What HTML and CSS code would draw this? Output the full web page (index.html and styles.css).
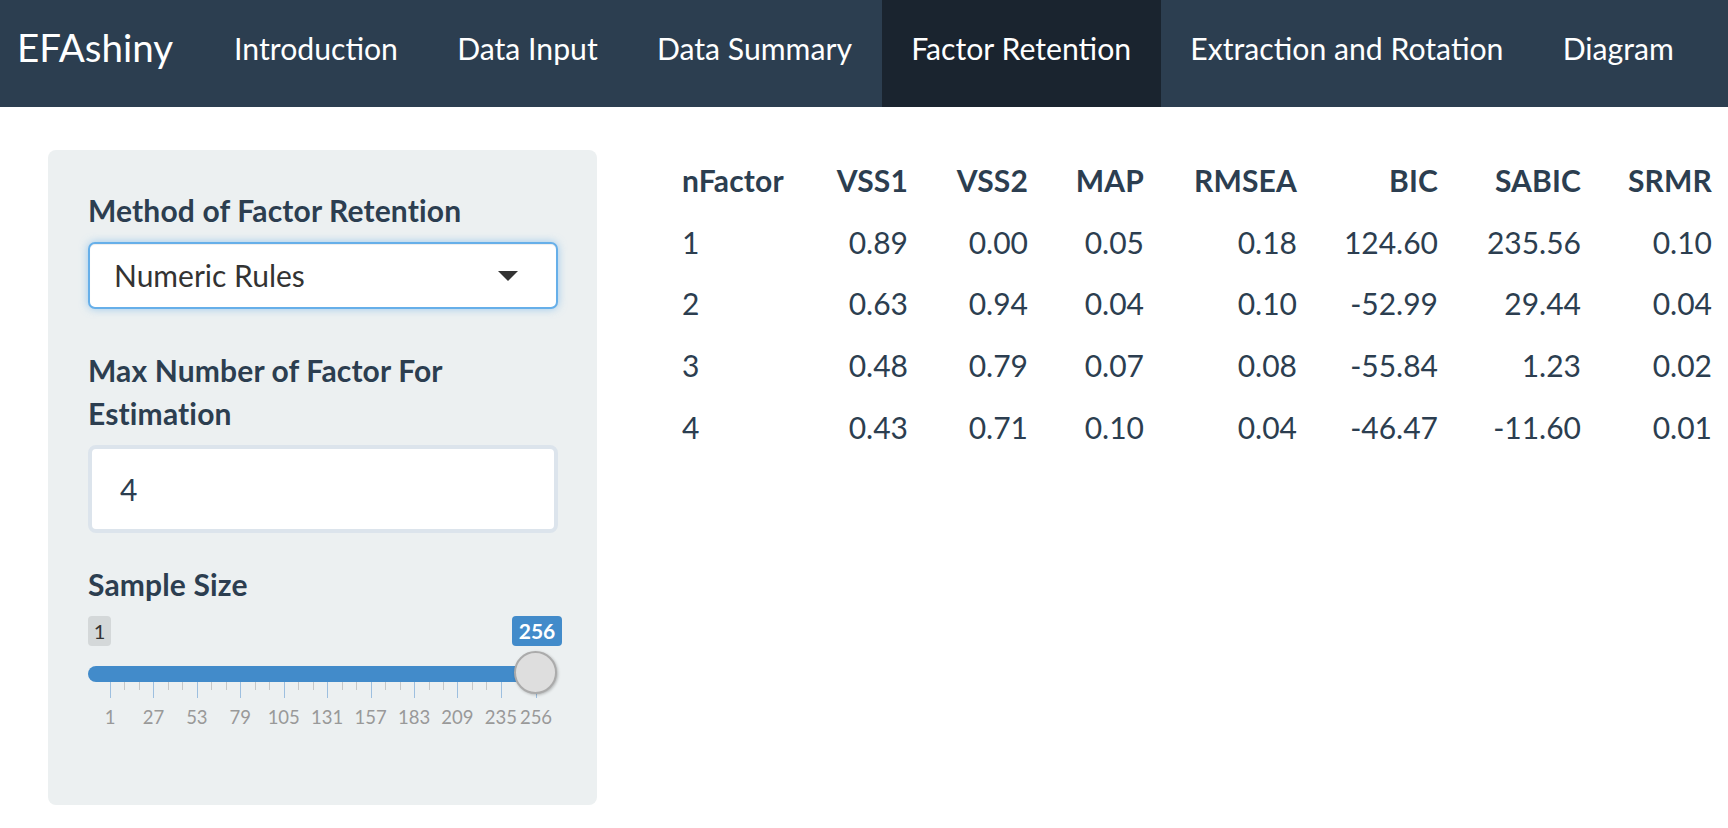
FILE: index.html
```html
<!DOCTYPE html>
<html>
<head>
<meta charset="utf-8">
<link rel="stylesheet" href="styles.css">
</head>
<body>
<nav class="navbar">
  <span class="brand">EFAshiny</span>
  <ul class="nav">
    <li class="nav-item">Introduction</li>
    <li class="nav-item">Data Input</li>
    <li class="nav-item">Data Summary</li>
    <li class="nav-item active">Factor Retention</li>
    <li class="nav-item">Extraction and Rotation</li>
    <li class="nav-item">Diagram</li>
  </ul>
</nav>
<div class="content">
  <aside class="well">
    <div class="form-group sel-group">
      <label class="label">Method of Factor Retention</label>
      <div class="select">
        <span class="select-text">Numeric Rules</span>
        <span class="caret"></span>
      </div>
    </div>
    <div class="form-group">
      <label class="label">Max Number of Factor For Estimation</label>
      <div class="num-input">4</div>
    </div>
    <div class="form-group">
      <label class="label">Sample Size</label>
      <div class="slider">
        <span class="badge-min">1</span>
        <span class="badge-val">256</span>
        <div class="bar"></div>
        <div class="grid">
          <span class="tick major" style="left:0%"></span>
          <span class="tick" style="left:3.399%"></span>
          <span class="tick" style="left:6.797%"></span>
          <span class="tick major" style="left:10.196%"></span>
          <span class="tick" style="left:13.595%"></span>
          <span class="tick" style="left:16.993%"></span>
          <span class="tick major" style="left:20.392%"></span>
          <span class="tick" style="left:23.791%"></span>
          <span class="tick" style="left:27.190%"></span>
          <span class="tick major" style="left:30.588%"></span>
          <span class="tick" style="left:33.987%"></span>
          <span class="tick" style="left:37.386%"></span>
          <span class="tick major" style="left:40.784%"></span>
          <span class="tick" style="left:44.183%"></span>
          <span class="tick" style="left:47.582%"></span>
          <span class="tick major" style="left:50.980%"></span>
          <span class="tick" style="left:54.379%"></span>
          <span class="tick" style="left:57.778%"></span>
          <span class="tick major" style="left:61.176%"></span>
          <span class="tick" style="left:64.575%"></span>
          <span class="tick" style="left:67.974%"></span>
          <span class="tick major" style="left:71.373%"></span>
          <span class="tick" style="left:74.771%"></span>
          <span class="tick" style="left:78.170%"></span>
          <span class="tick major" style="left:81.569%"></span>
          <span class="tick" style="left:84.967%"></span>
          <span class="tick" style="left:88.366%"></span>
          <span class="tick major" style="left:91.765%"></span>
          <span class="tick major" style="left:100%"></span>
          <span class="grid-label" style="left:0%">1</span>
          <span class="grid-label" style="left:10.196%">27</span>
          <span class="grid-label" style="left:20.392%">53</span>
          <span class="grid-label" style="left:30.588%">79</span>
          <span class="grid-label" style="left:40.784%">105</span>
          <span class="grid-label" style="left:50.980%">131</span>
          <span class="grid-label" style="left:61.176%">157</span>
          <span class="grid-label" style="left:71.373%">183</span>
          <span class="grid-label" style="left:81.569%">209</span>
          <span class="grid-label" style="left:91.765%">235</span>
          <span class="grid-label" style="left:100%">256</span>
        </div>
        <span class="handle"></span>
      </div>
    </div>
  </aside>
  <main class="main">
    <table class="table">
      <thead>
        <tr><th>nFactor</th><th>VSS1</th><th>VSS2</th><th>MAP</th><th>RMSEA</th><th>BIC</th><th>SABIC</th><th>SRMR</th></tr>
      </thead>
      <tbody>
        <tr><td>1</td><td>0.89</td><td>0.00</td><td>0.05</td><td>0.18</td><td>124.60</td><td>235.56</td><td>0.10</td></tr>
        <tr><td>2</td><td>0.63</td><td>0.94</td><td>0.04</td><td>0.10</td><td>-52.99</td><td>29.44</td><td>0.04</td></tr>
        <tr><td>3</td><td>0.48</td><td>0.79</td><td>0.07</td><td>0.08</td><td>-55.84</td><td>1.23</td><td>0.02</td></tr>
        <tr><td>4</td><td>0.43</td><td>0.71</td><td>0.10</td><td>0.04</td><td>-46.47</td><td>-11.60</td><td>0.01</td></tr>
      </tbody>
    </table>
  </main>
</div>
</body>
</html>
```
FILE: styles.css
```css
html, body {
  margin: 0;
  padding: 0;
  background: #ffffff;
  overflow: hidden;
}
body {
  font-family: Lato, "Open Sans", "Liberation Sans", sans-serif;
  font-size: 30px;
  line-height: 43px;
  color: #2c3e50;
}
.navbar {
  display: flex;
  align-items: stretch;
  height: 107px;
  background: #2c3e50;
  padding-left: 17px;
  box-sizing: border-box;
}
.brand {
  font-size: 38.5px;
  line-height: 43px;
  color: #ffffff;
  padding: 26px 30px 38px 0;
}
.nav {
  display: flex;
  list-style: none;
  margin: 0;
  padding: 0;
}
.nav-item {
  color: #ffffff;
  font-size: 30.2px;
  padding: 27px 29.6px 37px 29.6px;
  line-height: 43px;
}
.nav-item:first-child {
  padding-left: 31px;
}
.nav-item.active {
  background: #1a242f;
}
.content {
  display: flex;
  align-items: flex-start;
  padding: 43px 0 0 48px;
  column-gap: 85px;
}
.well {
  width: 549px;
  height: 655px;
  box-sizing: border-box;
  background: #ecf0f1;
  border-radius: 8px;
  padding: 39px 39px 38px 40px;
  flex-shrink: 0;
}
.form-group {
  margin-bottom: 30px;
}
.sel-group {
  margin-bottom: 40px;
}
.label {
  display: block;
  font-weight: 700;
  letter-spacing: 0.15px;
  margin-bottom: 10px;
}
.select {
  position: relative;
  height: 67px;
  box-sizing: border-box;
  border: 2px solid #66afe9;
  border-radius: 7px;
  background: #ffffff;
  box-shadow: inset 0 1px 1px rgba(0,0,0,0.075), 0 0 9px rgba(102,175,233,0.6);
  display: flex;
  align-items: center;
  padding-left: 24px;
  color: #333333;
}
.select-text {
  line-height: 43px;
}
.caret {
  position: absolute;
  right: 38px;
  top: 27px;
  width: 0;
  height: 0;
  border-style: solid;
  border-width: 10px 10px 0 10px;
  border-color: #333333 transparent transparent transparent;
}
.num-input {
  height: 88px;
  box-sizing: border-box;
  border: 4px solid #dce4ec;
  border-radius: 8px;
  background: #ffffff;
  padding-left: 28px;
  display: flex;
  align-items: center;
  color: #2c3e50;
}
.slider {
  position: relative;
  height: 124px;
  margin-top: 10px;
}
.badge-min {
  position: absolute;
  left: 0;
  top: 0;
  width: 23px;
  height: 30px;
  border-radius: 4px;
  background: #d4d8d9;
  color: #333333;
  font-size: 20px;
  line-height: 30px;
  text-align: center;
}
.badge-val {
  position: absolute;
  left: 424px;
  top: 0;
  width: 50px;
  height: 30px;
  border-radius: 4px;
  background: #428bca;
  color: #ffffff;
  font-size: 21px;
  font-weight: 700;
  line-height: 30px;
  text-align: center;
}
.bar {
  position: absolute;
  left: 0;
  top: 50px;
  width: 455px;
  height: 16px;
  border-radius: 8px 0 0 8px;
  background: #428bca;
}
.grid {
  position: absolute;
  left: 22px;
  top: 66px;
  width: 426px;
  height: 58px;
}
.tick {
  position: absolute;
  top: 0;
  width: 1px;
  height: 8px;
  background: #c4c7c9;
}
.tick.major {
  height: 16px;
  background: #9dbfdf;
}
.grid-label {
  position: absolute;
  top: 25px;
  transform: translateX(-50%);
  font-size: 18.5px;
  line-height: 20px;
  color: #999999;
}
.handle {
  position: absolute;
  left: 426px;
  top: 35px;
  width: 43px;
  height: 43px;
  box-sizing: border-box;
  border-radius: 50%;
  background: #dedede;
  border: 2px solid #ababab;
  box-shadow: 1px 1px 3px rgba(0,0,0,0.25);
}
.main {
  padding-top: 0;
}
.table {
  border-collapse: collapse;
  table-layout: fixed;
  width: 1030px;
}
.table th, .table td {
  padding: 9.3px 0;
  line-height: 43px;
  text-align: right;
  white-space: nowrap;
}
.table th {
  font-weight: 700;
  letter-spacing: 0.15px;
}
.table th:nth-child(1), .table td:nth-child(1) { width: 106px; text-align: left; }
.table th:nth-child(2) { width: 120px; }
.table th:nth-child(3) { width: 120px; }
.table th:nth-child(4) { width: 116px; }
.table th:nth-child(5) { width: 153px; }
.table th:nth-child(6) { width: 141px; }
.table th:nth-child(7) { width: 143px; }
.table th:nth-child(8) { width: 131px; }
```
